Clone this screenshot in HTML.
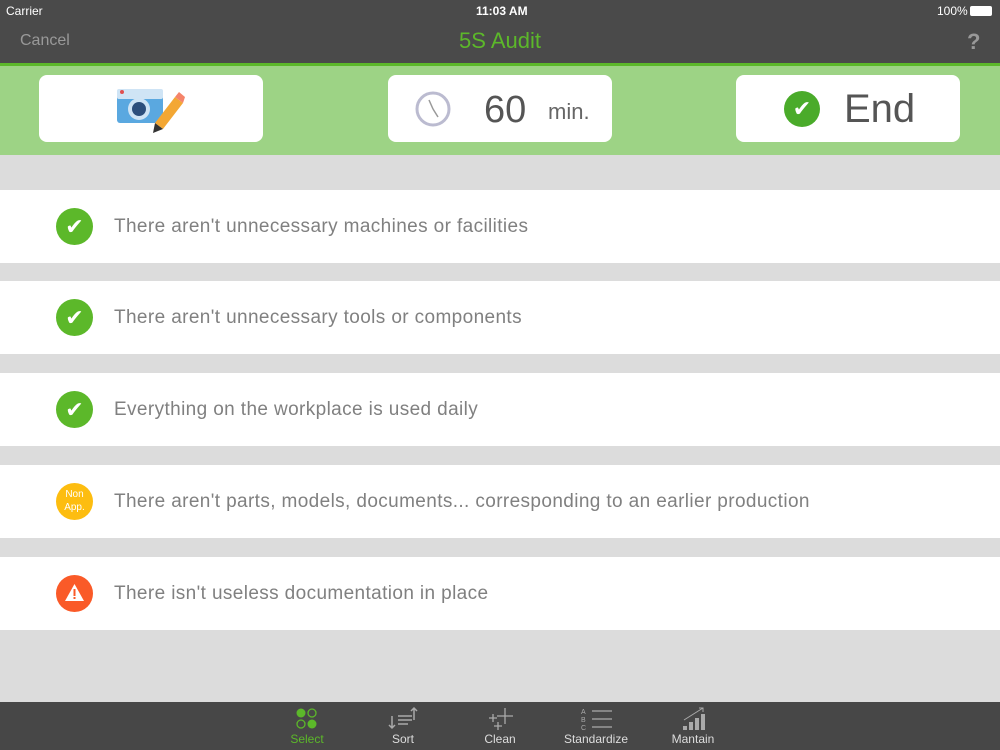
<!DOCTYPE html><html><head><style>
body{margin:0;width:1000px;height:750px;background:#dcdcdc;font-family:"Liberation Sans",sans-serif;position:relative;overflow:hidden}
.a{position:absolute}
.sb{top:0;left:0;width:1000px;height:66px;background:#4a4a4a}
.card{background:#fff;border-radius:8px;top:75px;width:224px;height:67px}
.row{left:0;width:1000px;height:73px;background:#fff}
.row span{position:absolute;left:114px;top:26px;font-size:19px;color:#808080;letter-spacing:.38px}
.ic{position:absolute;left:56px;top:18px;width:37px;height:37px;border-radius:50%}
.tab{top:702px;left:0;width:1000px;height:48px;background:#474747}
.tl{position:absolute;top:30px;font-size:12px;color:#ddd;width:100px;text-align:center}
</style></head><body>
<div class="a sb"></div>
<div class="a" style="left:6px;top:4px;color:#fff;font-size:12px">Carrier</div>
<div class="a" style="left:476px;top:4px;color:#fff;font-size:12px;font-weight:bold">11:03 AM</div>
<div class="a" style="left:937px;top:4px;color:#fff;font-size:12px">100%</div>
<div class="a" style="left:970px;top:6px;width:22px;height:10px;background:#fff;border-radius:2px"></div>
<div class="a" style="left:20px;top:32px;color:#999;font-size:16px">Cancel</div>
<div class="a" style="left:0;width:1000px;top:28px;text-align:center;color:#5cb82a;font-size:22px">5S Audit</div>
<div class="a" style="left:967px;top:29px;color:#999;font-size:22px;font-weight:bold">?</div>
<div class="a" style="top:63px;left:0;width:1000px;height:3px;background:#5cb82a"></div>
<div class="a" style="top:66px;left:0;width:1000px;height:89px;background:#9dd385"></div>
<div class="a card" style="left:39px">
<svg class="a" style="left:76px;top:10px" width="72" height="48"><rect x="2" y="10" width="46" height="28" rx="3" fill="#5aa8e0"/><rect x="2" y="4" width="46" height="10" rx="2" fill="#cfe4f5"/><circle cx="24" cy="24" r="11" fill="#cfe4f5"/><circle cx="24" cy="24" r="7" fill="#2d4f7c"/><circle cx="7" cy="7" r="2" fill="#e05050"/><path d="M40 38 L60 12 L68 18 L48 44 Z" fill="#f3a734"/><path d="M60 12 L64 7 L70 12 L68 18Z" fill="#f5846a"/><path d="M40 38 L38 48 L48 44Z" fill="#333"/></svg></div>
<div class="a card" style="left:388px">
<svg class="a" style="left:26px;top:15px" width="38" height="38"><circle cx="19" cy="19" r="16" fill="#fff" stroke="#bbbbd0" stroke-width="3"/><path d="M19 19 L15 10 M19 19 L24 27" stroke="#999" stroke-width="1.5"/></svg>
<div class="a" style="left:96px;top:14px;font-size:38px;color:#555">60</div>
<div class="a" style="left:160px;top:24px;font-size:22px;color:#666">min.</div></div>
<div class="a card" style="left:736px">
<div class="a" style="left:48px;top:16px;width:36px;height:36px;border-radius:50%;background:#4aab2a;color:#fff;text-align:center;font-size:22px;line-height:36px">✔</div>
<div class="a" style="left:108px;top:12px;font-size:40px;color:#555">End</div></div>
<div class="a row" style="top:190px"><div class="ic" style="background:#5cb82a;color:#fff;text-align:center;line-height:37px;font-size:22px">✔</div><span>There aren't unnecessary machines or facilities</span></div>
<div class="a row" style="top:281px"><div class="ic" style="background:#5cb82a;color:#fff;text-align:center;line-height:37px;font-size:22px">✔</div><span>There aren't unnecessary tools or components</span></div>
<div class="a row" style="top:373px"><div class="ic" style="background:#5cb82a;color:#fff;text-align:center;line-height:37px;font-size:22px">✔</div><span>Everything on the workplace is used daily</span></div>
<div class="a row" style="top:465px"><div class="ic" style="background:#fdbd10;color:#fff;text-align:center;font-size:10px;line-height:13px;padding-top:5px;height:32px">Non<br>App.</div><span>There aren't parts, models, documents... corresponding to an earlier production</span></div>
<div class="a row" style="top:557px"><div class="ic" style="background:#fa5a28"><svg width="37" height="37"><path d="M18.5 9 L28 26 L9 26Z" fill="#fff"/><rect x="17.5" y="14" width="2" height="7" fill="#fa5a28"/><rect x="17.5" y="22" width="2" height="2" fill="#fa5a28"/></svg></div><span>There isn't useless documentation in place</span></div>
<div class="a tab">
<svg class="a" style="left:295px;top:6px" width="24" height="22"><circle cx="6" cy="5" r="4.5" fill="#5cb82a"/><circle cx="17" cy="5" r="4" fill="none" stroke="#5cb82a" stroke-width="1.3"/><circle cx="6" cy="16" r="4" fill="none" stroke="#5cb82a" stroke-width="1.3"/><circle cx="17" cy="16" r="4.5" fill="#5cb82a"/></svg>
<div class="tl" style="left:257px;color:#5cb82a">Select</div>
<svg class="a" style="left:388px;top:4px" width="32" height="24" stroke="#aaa" stroke-width="1.5" fill="none"><path d="M4 10v12M1 19l3 3 3-3M10 10h14M10 14h14M10 18h10M26 2v12M23 5l3-3 3 3"/></svg>
<div class="tl" style="left:353px">Sort</div>
<svg class="a" style="left:486px;top:4px" width="30" height="26" stroke="#aaa" stroke-width="1.3" fill="none"><path d="M19 2v16M11 10h16M7 8v8M3 12h8M12 16v8M8 20h8"/></svg>
<div class="tl" style="left:450px">Clean</div>
<svg class="a" style="left:579px;top:4px" width="36" height="26" fill="none" stroke="#aaa" stroke-width="1.3"><path d="M13 5h20M13 13h20M13 21h20"/><text x="2" y="8" font-size="7" fill="#aaa" stroke="none">A</text><text x="2" y="16" font-size="7" fill="#aaa" stroke="none">B</text><text x="2" y="24" font-size="7" fill="#aaa" stroke="none">C</text></svg>
<div class="tl" style="left:546px">Standardize</div>
<svg class="a" style="left:682px;top:4px" width="24" height="26" fill="#aaa"><rect x="1" y="20" width="4" height="4"/><rect x="7" y="16" width="4" height="8"/><rect x="13" y="12" width="4" height="12"/><rect x="19" y="8" width="4" height="16"/><path d="M2 14L21 2M17 2h4v4" stroke="#aaa" fill="none"/></svg>
<div class="tl" style="left:643px">Mantain</div>
</div>
</body></html>
